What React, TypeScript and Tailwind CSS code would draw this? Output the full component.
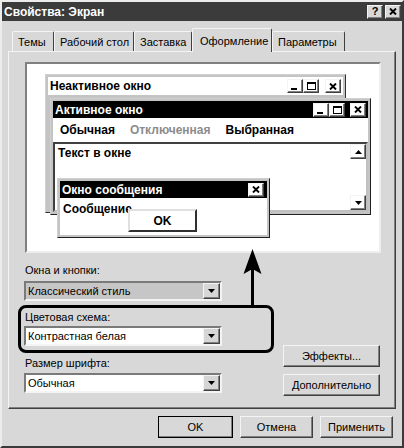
import React from "react";

const raised =
  "border border-t-[#f4f4f4] border-l-[#f4f4f4] border-r-[#404040] border-b-[#404040] shadow-[inset_-1px_-1px_0_#808080]";

function Glyph({ type }: { type: "min" | "max" | "close" }) {
  if (type === "min") return <div className="w-[6px] h-[2px] bg-black mt-[6px] -ml-[2px]" />;
  if (type === "max") return <div className="w-[9px] h-[8px] border border-black border-t-2" />;
  return (
    <svg width="8" height="7" viewBox="0 0 8 7">
      <path d="M1 0.5 L7 6.5 M7 0.5 L1 6.5" stroke="black" strokeWidth="1.9" />
    </svg>
  );
}

function WinBtn({ type }: { type: "min" | "max" | "close" }) {
  return (
    <div className={`w-[16px] h-[14px] bg-white flex items-center justify-center ${raised}`}>
      <Glyph type={type} />
    </div>
  );
}

function ScrollBtn({ down }: { down?: boolean }) {
  return (
    <div className={`w-[16px] h-[15px] bg-white flex items-center justify-center ${raised}`}>
      <svg width="7" height="4" viewBox="0 0 7 4">
        {down ? <path d="M0 0 L7 0 L3.5 4 Z" fill="black" /> : <path d="M0 4 L7 4 L3.5 0 Z" fill="black" />}
      </svg>
    </div>
  );
}

function Select({ text, bg }: { text: string; bg: string }) {
  return (
    <div
      className={`w-[198px] h-[20px] border-2 border-t-[#7a7a7a] border-l-[#7a7a7a] border-r-[#f4f4f4] border-b-[#f4f4f4] flex items-center ${bg}`}
    >
      <span className="flex-1 pl-[2px] text-[11px] leading-[14px] text-black">{text}</span>
      <div className={`w-[17px] h-[16px] bg-[#d6d6d6] flex items-center justify-center ${raised}`}>
        <svg width="7" height="4" viewBox="0 0 7 4">
          <path d="M0 0 L7 0 L3.5 4 Z" fill="black" />
        </svg>
      </div>
    </div>
  );
}

function Btn({ children, w, def }: { children: React.ReactNode; w: string; def?: boolean }) {
  return (
    <div
      className={`${w} h-[22px] bg-[#d8d8d8] flex items-center justify-center text-[11px] text-black ${
        def ? "outline outline-1 -outline-offset-1 outline-black" : ""
      } ${raised}`}
    >
      {children}
    </div>
  );
}

const tabs = [
  { t: "Темы", w: "w-[42px]" },
  { t: "Рабочий стол", w: "w-[80px]" },
  { t: "Заставка", w: "w-[58px]" },
  { t: "Оформление", w: "w-[80px]", sel: true },
  { t: "Параметры", w: "w-[73px]" },
];

export default function App() {
  return (
    <div className="relative w-[404px] h-[448px] overflow-hidden bg-[#d8d8d8] border-2 border-t-[#ececec] border-l-[#ececec] border-r-[#3a3a3a] border-b-[#3a3a3a] font-['Liberation_Sans',Arial,sans-serif] flex flex-col">
      {/* title bar */}
      <div className="h-[19px] bg-[#3b3b3b] flex items-center justify-between pl-[2px] pr-[1px]">
        <span className="text-white font-bold text-[12px] leading-[14px]">Свойства: Экран</span>
        <div className="flex gap-[2px]">
          <div className={`w-[16px] h-[14px] bg-[#d8d8d8] flex items-center justify-center text-[11px] font-bold leading-none text-black ${raised}`}>?</div>
          <div className={`w-[16px] h-[14px] bg-[#d8d8d8] flex items-center justify-center ${raised}`}>
            <Glyph type="close" />
          </div>
        </div>
      </div>

      {/* tabs */}
      <div className="flex items-end pl-[10px] pt-[6px] h-[30px] relative z-10">
        {tabs.map((tb) => (
          <div
            key={tb.t}
            className={`${tb.w} ${
              tb.sel ? "h-[24px] bg-[#d8d8d8] -mb-[1px] pt-[5px] pl-[7px]" : "h-[20px] pt-[3px] pl-[5px]"
            } border-t border-l border-r border-t-[#f4f4f4] border-l-[#f4f4f4] border-r-[#404040] rounded-t-[2px] text-[11px] leading-[14px] text-black whitespace-nowrap`}
          >
            {tb.t}
          </div>
        ))}
      </div>

      {/* panel */}
      <div className="relative ml-[6px] w-[388px] h-[358px] border border-t-[#f4f4f4] border-l-[#f4f4f4] border-r-[#404040] border-b-[#404040] shadow-[inset_-1px_-1px_0_#808080] flex flex-col">
        {/* preview */}
        <div className="ml-[16px] mt-[10px] w-[356px] h-[191px] border-2 border-t-[#808080] border-l-[#808080] border-r-[#eeeeee] border-b-[#eeeeee] bg-white relative">
          {/* inactive window */}
          <div className="absolute left-[18px] top-[10px] w-[301px] h-[139px] border border-t-[#d0d0d0] border-l-[#d0d0d0] border-r-[#303030] border-b-[#303030] bg-[#c4c4c4] p-[2px]">
            <div className="h-[18px] bg-white flex items-center justify-between pl-[2px] pr-[2px]">
              <span className="font-bold text-[12px] leading-[14px] text-black">Неактивное окно</span>
              <div className="flex items-center">
                <WinBtn type="min" />
                <WinBtn type="max" />
                <div className="w-[6px]" />
                <WinBtn type="close" />
              </div>
            </div>
          </div>

          {/* active window */}
          <div className="absolute left-[23px] top-[34px] w-[321px] h-[117px] border border-t-[#d0d0d0] border-l-[#d0d0d0] border-r-[#202020] border-b-[#202020] bg-[#c4c4c4] p-[2px] flex flex-col">
            <div className="h-[17px] bg-black flex items-center justify-between pl-[2px] pr-[2px]">
              <span className="font-bold text-[12px] leading-[14px] text-white">Активное окно</span>
              <div className="flex items-center">
                <WinBtn type="min" />
                <WinBtn type="max" />
                <div className="w-[5px]" />
                <WinBtn type="close" />
              </div>
            </div>
            <div className="h-[24px] bg-white flex items-center pl-[7px] gap-[15px] font-bold text-[12px] leading-[14px]">
              <span className="text-black">Обычная</span>
              <span className="text-[#8c8c8c]">Отключенная</span>
              <span className="text-black">Выбранная</span>
            </div>
            <div className="flex-1 bg-white border-2 border-t-[#404040] border-l-[#404040] border-r-[#c0c0c0] border-b-[#c0c0c0] flex">
              <div className="flex-1 pl-[3px] pt-[2px] font-bold text-[12px] leading-[14px] text-black">Текст в окне</div>
              <div className="flex flex-col justify-between">
                <ScrollBtn />
                <ScrollBtn down />
              </div>
            </div>
          </div>

          {/* message window */}
          <div className="absolute left-[30px] top-[114px] w-[213px] h-[60px] border border-t-[#d0d0d0] border-l-[#d0d0d0] border-r-[#202020] border-b-[#202020] bg-[#c4c4c4] p-[2px] flex flex-col">
            <div className="h-[17px] bg-black flex items-center justify-between pl-[2px] pr-[3px]">
              <span className="font-bold text-[12px] leading-[14px] text-white">Окно сообщения</span>
              <WinBtn type="close" />
            </div>
            <div className="flex-1 bg-white relative">
              <div className="pl-[3px] pt-[4px] font-bold text-[12px] leading-[14px] text-black">Сообщение</div>
              <div className="absolute left-[68px] top-[11px] w-[69px] h-[23px] bg-white flex items-center justify-center font-bold text-[12px] text-black border-2 border-t-[#e0e0e0] border-l-[#e0e0e0] border-r-[#303030] border-b-[#303030]">
                OK
              </div>
            </div>
          </div>
        </div>

        {/* lower area */}
        <div className="flex">
          <div className="ml-[15px] flex flex-col">
            <div className="mt-[10px] h-[14px] text-[11px] leading-[14px] text-black pl-[1px]">Окна и кнопки:</div>
            <div className="mt-[4px]">
              <Select text="Классический стиль" bg="bg-[#c6c6c6]" />
            </div>
            <div className="mt-[9px] h-[14px] text-[11px] leading-[14px] text-black pl-[1px]">Цветовая схема:</div>
            <div className="mt-[2px]">
              <Select text="Контрастная белая" bg="bg-white" />
            </div>
            <div className="mt-[10px] h-[14px] text-[11px] leading-[14px] text-black pl-[1px]">Размер шрифта:</div>
            <div className="mt-[3px]">
              <Select text="Обычная" bg="bg-white" />
            </div>
          </div>
          <div className="ml-auto mr-[15px] pt-[92px] flex flex-col gap-[7px]">
            <Btn w="w-[97px]">Эффекты...</Btn>
            <Btn w="w-[97px]">Дополнительно</Btn>
          </div>
        </div>
      </div>

      {/* bottom buttons */}
      <div className="flex justify-end gap-[7px] pr-[9px] mt-[7px]">
        <Btn w="w-[75px]" def>
          OK
        </Btn>
        <Btn w="w-[73px]">Отмена</Btn>
        <Btn w="w-[73px]">Применить</Btn>
      </div>

      {/* annotation: highlight + arrow */}
      <div className="absolute left-[16px] top-[303px] w-[256px] h-[48px] border-[3px] border-black rounded-[8px] pointer-events-none" />
      <svg className="absolute left-0 top-0 pointer-events-none" width="404" height="448" viewBox="0 0 404 448">
        <path d="M250.5 262 L250.5 304" stroke="black" strokeWidth="3" />
        <path d="M250.5 247 L259.5 272 L250.5 267 L241.5 272 Z" fill="black" />
      </svg>
    </div>
  );
}
